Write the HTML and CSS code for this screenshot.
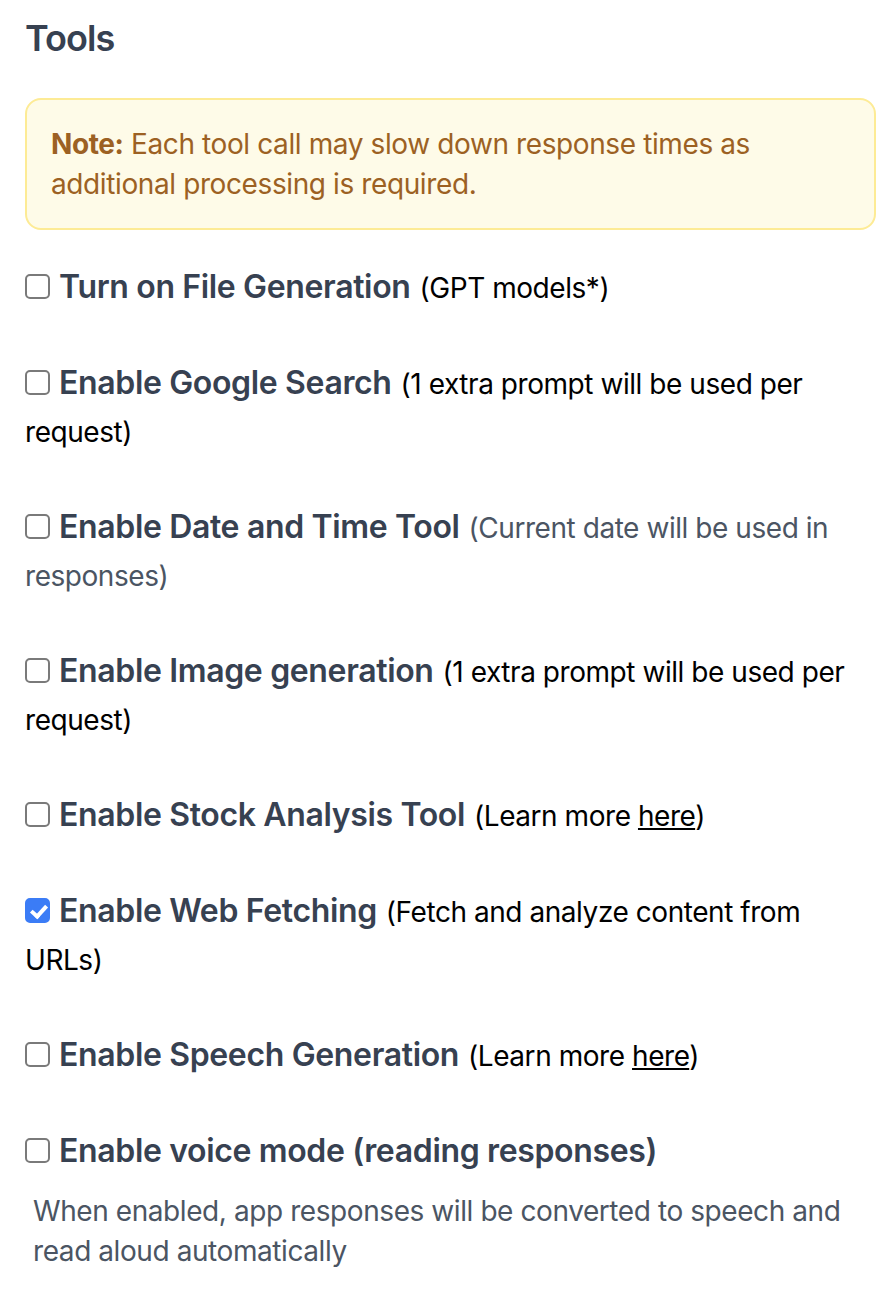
FILE: index.html
```html
<!DOCTYPE html>
<html lang="en">
<head>
  <meta charset="UTF-8" />
  <meta name="viewport" content="width=device-width, initial-scale=1.0" />
  <title>Tools</title>
  <link rel="stylesheet" href="styles.css">
</head>
<body>
  <div class="tools-panel">
    <h2 class="panel-title">Tools</h2>

    <div class="note">
      <strong>Note:</strong> Each tool call may slow down response times as additional processing is required.
    </div>

    <div class="tool-list">
      <label class="tool">
        <input type="checkbox" class="check"><span class="tool-name">Turn on File Generation</span> <span class="hint">(GPT models*)</span>
      </label>

      <label class="tool">
        <input type="checkbox" class="check"><span class="tool-name">Enable Google Search</span> <span class="hint">(1 extra prompt will be used per request)</span>
      </label>

      <label class="tool">
        <input type="checkbox" class="check"><span class="tool-name">Enable Date and Time Tool</span> <span class="hint muted">(Current date will be used in responses)</span>
      </label>

      <label class="tool">
        <input type="checkbox" class="check"><span class="tool-name">Enable Image generation</span> <span class="hint">(1 extra prompt will be used per request)</span>
      </label>

      <label class="tool">
        <input type="checkbox" class="check"><span class="tool-name">Enable Stock Analysis Tool</span> <span class="hint">(Learn more <a href="#">here</a>)</span>
      </label>

      <label class="tool">
        <input type="checkbox" class="check" checked><span class="tool-name">Enable Web Fetching</span> <span class="hint">(Fetch and analyze content from URLs)</span>
      </label>

      <label class="tool">
        <input type="checkbox" class="check"><span class="tool-name">Enable Speech Generation</span> <span class="hint">(Learn more <a href="#">here</a>)</span>
      </label>

      <div class="tool">
        <label>
          <input type="checkbox" class="check"><span class="tool-name">Enable voice mode (reading responses)</span>
        </label>
        <p class="tool-desc">When enabled, app responses will be converted to speech and read aloud automatically</p>
      </div>
    </div>
  </div>
</body>
</html>
```

FILE: styles.css
```css
body, html {
  margin: 0;
  padding: 0;
  background: #fff;
  font-family: Inter, "Noto Sans", sans-serif;
}
.tools-panel {
  padding: 10px 0 40px 25px;
}
.panel-title {
  margin: 0 0 32px 0;
  font-size: 36px;
  line-height: 56px;
  font-weight: 600;
  letter-spacing: -0.025em;
  color: #374151;
}
.note {
  background: #fefbe8;
  border: 2px solid #fdeb95;
  border-radius: 16px;
  padding: 24px;
  font-size: 28px;
  line-height: 40px;
  letter-spacing: -0.014em;
  color: #9c6123;
  margin-bottom: 33px;
}
.note strong {
  font-weight: 700;
}
.tool-list {
  display: flex;
  flex-direction: column;
  gap: 48px;
}
.tool {
  display: block;
  font-size: 32px;
  line-height: 48px;
  color: #000;
}
.check {
  appearance: none;
  -webkit-appearance: none;
  width: 25px;
  height: 25px;
  margin: 0 9px 0 0;
  border: 2px solid #7a7a7a;
  border-radius: 5px;
  background: #fff;
  box-sizing: border-box;
  vertical-align: -1px;
  position: relative;
}
.check:checked {
  background: #3b7cf6;
  border-color: #3b7cf6;
}
.check:checked::after {
  content: "";
  position: absolute;
  left: 7px;
  top: 2px;
  width: 6px;
  height: 12px;
  border-right: 4px solid #fff;
  border-bottom: 4px solid #fff;
  transform: rotate(42deg);
}
.tool-name {
  font-weight: 600;
  letter-spacing: -0.011em;
  color: #374151;
}
.hint {
  font-size: 28px;
  line-height: 40px;
  letter-spacing: -0.016em;
  color: #000;
}
.hint.muted {
  color: #4b5563;
}
.hint a {
  color: #000;
  text-decoration: underline;
}
.tool-desc {
  margin: 16px 0 0 8px;
  font-size: 28px;
  line-height: 40px;
  letter-spacing: -0.015em;
  color: #4b5563;
}
```
